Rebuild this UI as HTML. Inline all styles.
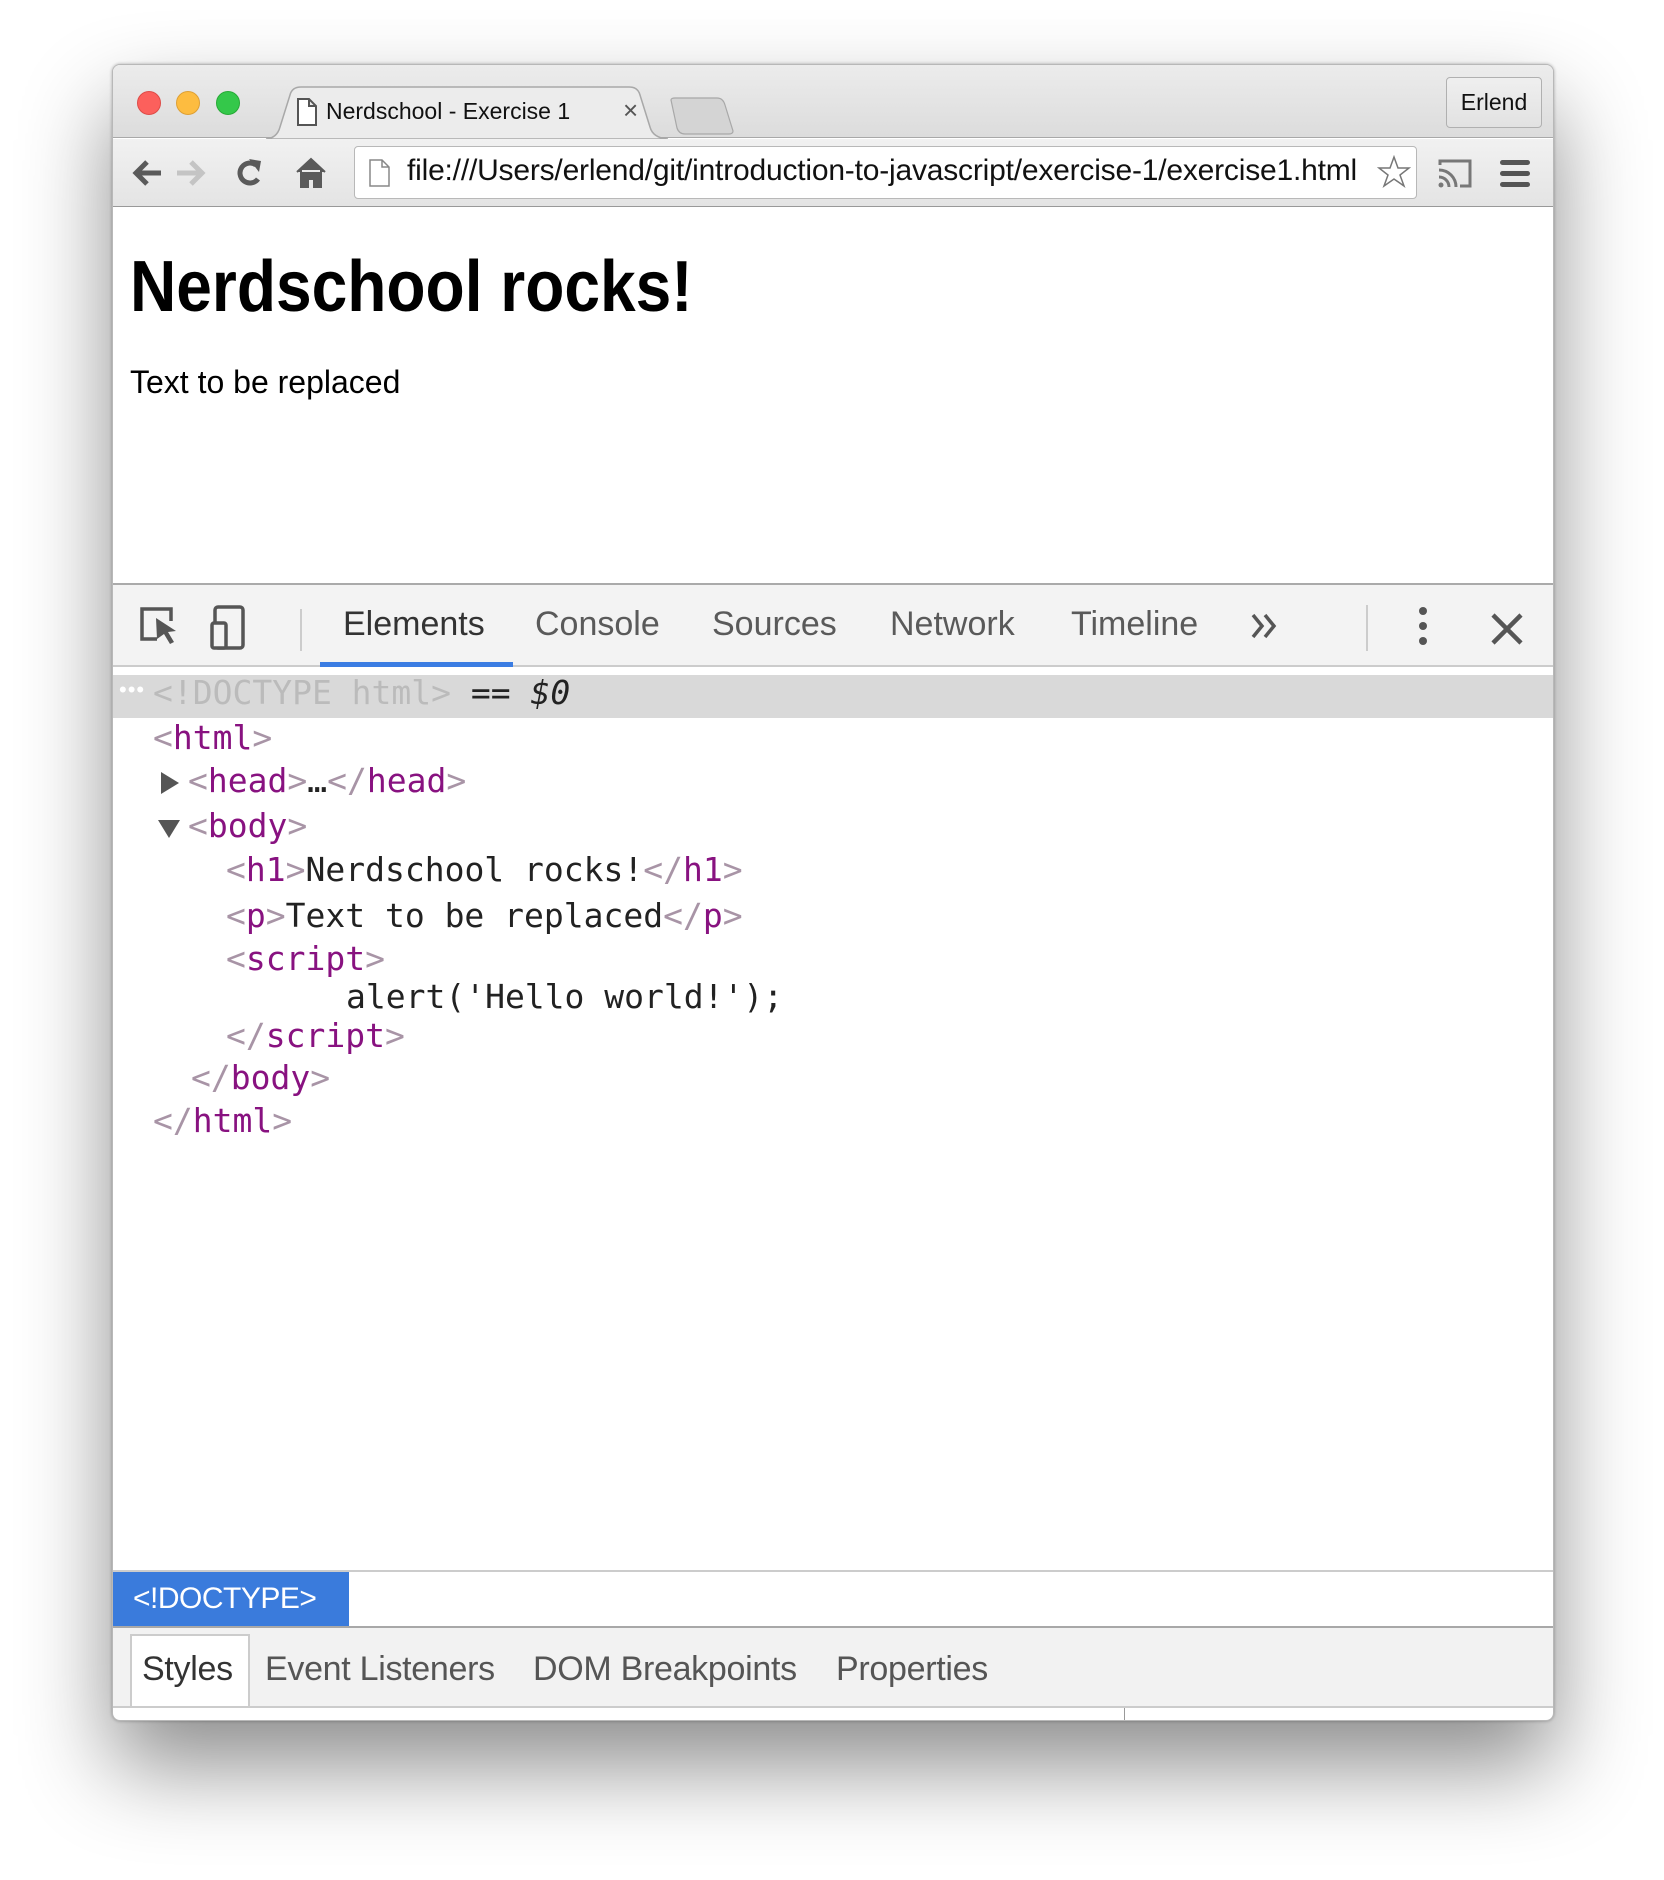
<!DOCTYPE html>
<html><head><style>
*{margin:0;padding:0;box-sizing:border-box}
body{width:1664px;height:1880px;background:#fff;position:relative;overflow:hidden;font-family:"Liberation Sans",sans-serif}
.a{position:absolute}
#win{left:112px;top:64px;width:1442px;height:1657px;border-radius:8px;background:#fff;box-shadow:0 45px 90px rgba(0,0,0,.45),0 0 3px rgba(0,0,0,.3);overflow:hidden;border:1px solid #b8b8b8}
.mono{font-family:"DejaVu Sans Mono","Liberation Mono",monospace;font-size:33px;white-space:pre;color:#222}
.t{color:#881280}.b{color:#a894a6}
</style></head><body>
<div id="win" class="a">
 <div class="a" style="left:0;top:0;width:1442px;height:73px;background:linear-gradient(#ececec,#dcdcdc);border-bottom:1px solid #a8a8a8"></div>
 <div class="a" style="left:24px;top:26px;width:24px;height:24px;border-radius:50%;background:#fc605c;border:1px solid #de4b47"></div>
 <div class="a" style="left:63px;top:26px;width:24px;height:24px;border-radius:50%;background:#fdbc40;border:1px solid #dea034"></div>
 <div class="a" style="left:103px;top:26px;width:24px;height:24px;border-radius:50%;background:#34c84a;border:1px solid #27aa36"></div>
 <svg class="a" style="left:152px;top:21px" width="404" height="54"><path d="M1 53 Q12 52 15 41 L25 9 Q27 1 36 1 L364 1 Q373 1 375 9 L385 41 Q388 52 403 53 Z" fill="#ececec" stroke="#a8a8a8" stroke-width="1.5"/></svg>
 <svg class="a" style="left:554px;top:32px" width="70" height="40"><path d="M4 3 Q4 1 8 1 L50 1 Q56 1 58 8 L66 34 Q66 37 62 37 L18 37 Q12 37 10 31 Z" fill="#d4d4d4" stroke="#a8a8a8" stroke-width="1.2"/></svg>
 <svg class="a" style="left:183px;top:32px" width="22" height="30"><path d="M2 2 H13 L20 9 V28 H2 Z M13 2 V9 H20" fill="#fff" stroke="#555" stroke-width="2"/></svg>
 <div class="a" style="left:213px;top:33px;font-size:23px;color:#111">Nerdschool - Exercise 1</div>
 <div class="a" style="left:510px;top:30px;font-size:26px;color:#555">×</div>
 <div class="a" style="left:1333px;top:12px;width:96px;height:51px;border:1px solid #b0b0b0;border-radius:4px;background:linear-gradient(#efefef,#e2e2e2);font-size:23px;text-align:center;line-height:49px;color:#111">Erlend</div>
 <div class="a" style="left:0;top:74px;width:1442px;height:68px;background:linear-gradient(#f1f1f1,#e4e4e4);border-bottom:1.5px solid #999"></div>
 <svg class="a" style="left:14px;top:88px" width="200" height="40">
  <path d="M34 20 H10 M20 9 L9 20 L20 31" stroke="#5a5a5a" stroke-width="5" fill="none"/>
  <path d="M50 20 H74 M64 9 L75 20 L64 31" stroke="#c4c4c4" stroke-width="5" fill="none"/>
  <path d="M129 12 A10 10 0 1 0 131 26" stroke="#5a5a5a" stroke-width="5" fill="none"/><path d="M122 6 L134 8 L132 19 Z" fill="#5a5a5a"/>
  <path d="M170 19 L184 6 L198 19 M174 17 V34 H181 V26 H187 V34 H194 V17" fill="#5a5a5a" stroke="#5a5a5a" stroke-width="2"/>
 </svg>
 <div class="a" style="left:241px;top:81px;width:1063px;height:53px;background:#fff;border:1px solid #b8b8b8;border-radius:4px"></div>
 <svg class="a" style="left:256px;top:94px" width="22" height="28"><path d="M1 1 H13 L20 8 V27 H1 Z M13 1 V8 H20" fill="#fff" stroke="#888" stroke-width="1.5"/></svg>
 <div class="a" style="left:294px;top:89px;font-size:30px;color:#111;letter-spacing:-0.2px">file:///Users/erlend/git/introduction-to-javascript/exercise-1/exercise1.html</div>
 <svg class="a" style="left:1264px;top:90px" width="34" height="34"><path d="M17 2 L21 13 L32 13 L23 20 L27 31 L17 24 L7 31 L11 20 L2 13 L13 13 Z" fill="#fff" stroke="#777" stroke-width="1.5"/></svg>
 <svg class="a" style="left:1323px;top:92px" width="40" height="34"><path d="M4 8 V4 H34 V29 H24" stroke="#777" stroke-width="3" fill="none"/><path d="M3 13 A17 17 0 0 1 20 30 M3 20 A10 10 0 0 1 13 30" stroke="#777" stroke-width="3" fill="none"/><circle cx="5" cy="28" r="2.5" fill="#777"/></svg>
 <svg class="a" style="left:1387px;top:94px" width="32" height="30"><rect x="0" y="1" width="30" height="5" rx="2.5" fill="#555"/><rect x="0" y="12" width="30" height="5" rx="2.5" fill="#555"/><rect x="0" y="23" width="30" height="5" rx="2.5" fill="#555"/></svg>
 <div class="a" style="left:17px;top:181px;font-size:72px;font-weight:bold;color:#000;transform:scaleX(0.89);transform-origin:0 0;white-space:nowrap">Nerdschool rocks!</div>
 <div class="a" style="left:17px;top:299px;font-size:32px;color:#000;white-space:nowrap">Text to be replaced</div>
 <div class="a" style="left:0;top:518px;width:1442px;height:84px;background:#f3f3f3;border-top:2px solid #aaa;border-bottom:2px solid #ccc"></div>
 <svg class="a" style="left:26px;top:540px" width="120" height="46"><path d="M18 34 H3 V4 H32 V16" stroke="#555" stroke-width="3.5" fill="none"/><path d="M17 13 L37 26 L29 27 L35 37 L31 39 L25 29 L18 34 Z" fill="#555"/><rect x="76" y="2" width="28" height="41" rx="3" stroke="#555" stroke-width="3.5" fill="none"/><rect x="73" y="18" width="14" height="25" rx="2" stroke="#555" stroke-width="3.5" fill="#f3f3f3"/></svg>
 <div class="a" style="left:187px;top:544px;width:2px;height:42px;background:#ccc"></div>
 <div class="a" style="left:207px;top:597px;width:193px;height:5px;background:#3b7de3"></div>
 <div class="a" style="left:230px;top:540px;font-size:34px;color:#333">Elements</div>
 <div class="a" style="left:422px;top:540px;font-size:34px;color:#5a5a5a">Console</div>
 <div class="a" style="left:599px;top:540px;font-size:34px;color:#5a5a5a">Sources</div>
 <div class="a" style="left:777px;top:540px;font-size:34px;color:#5a5a5a">Network</div>
 <div class="a" style="left:958px;top:540px;font-size:34px;color:#5a5a5a">Timeline</div>
 <svg class="a" style="left:1137px;top:547px" width="30" height="28"><path d="M3 3 L12 14 L3 25 M15 3 L24 14 L15 25" stroke="#555" stroke-width="3.5" fill="none"/></svg>
 <div class="a" style="left:1253px;top:540px;width:2px;height:46px;background:#ccc"></div>
 <svg class="a" style="left:1300px;top:540px" width="20" height="46"><circle cx="10" cy="6" r="4" fill="#555"/><circle cx="10" cy="21" r="4" fill="#555"/><circle cx="10" cy="36" r="4" fill="#555"/></svg>
 <svg class="a" style="left:1376px;top:546px" width="36" height="36"><path d="M4 4 L32 32 M32 4 L4 32" stroke="#555" stroke-width="4.5"/></svg>
 <div class="a" style="left:0;top:610px;width:1442px;height:43px;background:#d9d9d9"></div>
 <div class="a" style="left:6px;top:612px;font-size:22px;color:#fff;letter-spacing:1px">•••</div>
 <div class="a mono" style="left:40px;top:608px;color:#bbb">&lt;!DOCTYPE html&gt; <span style="color:#222">== </span><i style="color:#222">$0</i></div>
 <div class="a mono" style="left:40px;top:653px"><span class="b">&lt;</span><span class="t">html</span><span class="b">&gt;</span></div>
 <div class="a" style="left:48px;top:707px;width:0;height:0;border-left:18px solid #555;border-top:11px solid transparent;border-bottom:11px solid transparent"></div>
 <div class="a mono" style="left:75px;top:696px"><span class="b">&lt;</span><span class="t">head</span><span class="b">&gt;</span>…<span class="b">&lt;/</span><span class="t">head</span><span class="b">&gt;</span></div>
 <div class="a" style="left:45px;top:755px;width:0;height:0;border-top:18px solid #555;border-left:11px solid transparent;border-right:11px solid transparent"></div>
 <div class="a mono" style="left:75px;top:741px"><span class="b">&lt;</span><span class="t">body</span><span class="b">&gt;</span></div>
 <div class="a mono" style="left:113px;top:785px"><span class="b">&lt;</span><span class="t">h1</span><span class="b">&gt;</span>Nerdschool rocks!<span class="b">&lt;/</span><span class="t">h1</span><span class="b">&gt;</span></div>
 <div class="a mono" style="left:113px;top:831px"><span class="b">&lt;</span><span class="t">p</span><span class="b">&gt;</span>Text to be replaced<span class="b">&lt;/</span><span class="t">p</span><span class="b">&gt;</span></div>
 <div class="a mono" style="left:113px;top:874px"><span class="b">&lt;</span><span class="t">script</span><span class="b">&gt;</span></div>
 <div class="a mono" style="left:233px;top:912px">alert('Hello world!');</div>
 <div class="a mono" style="left:113px;top:951px"><span class="b">&lt;/</span><span class="t">script</span><span class="b">&gt;</span></div>
 <div class="a mono" style="left:78px;top:993px"><span class="b">&lt;/</span><span class="t">body</span><span class="b">&gt;</span></div>
 <div class="a mono" style="left:40px;top:1036px"><span class="b">&lt;/</span><span class="t">html</span><span class="b">&gt;</span></div>
 <div class="a" style="left:0;top:1505px;width:1442px;height:2px;background:#ccc"></div>
 <div class="a" style="left:0;top:1507px;width:236px;height:54px;background:#3a7bdc;color:#fff;font-size:30px;line-height:54px;padding-left:20px;letter-spacing:-0.5px">&lt;!DOCTYPE&gt;</div>
 <div class="a" style="left:0;top:1561px;width:1442px;height:82px;background:#f2f2f2;border-top:2px solid #a8a8a8;border-bottom:2px solid #ccc"></div>
 <div class="a" style="left:17px;top:1569px;width:120px;height:72px;background:#fff;border:2px solid #ccc;border-bottom:none"></div>
 <div class="a" style="left:29px;top:1585px;font-size:34px;color:#333;letter-spacing:-0.3px">Styles</div>
 <div class="a" style="left:152px;top:1585px;font-size:34px;color:#555;letter-spacing:-0.3px">Event Listeners</div>
 <div class="a" style="left:420px;top:1585px;font-size:34px;color:#555;letter-spacing:-0.3px">DOM Breakpoints</div>
 <div class="a" style="left:723px;top:1585px;font-size:34px;color:#555;letter-spacing:-0.3px">Properties</div>
 <div class="a" style="left:1011px;top:1643px;width:1px;height:14px;background:#999"></div>
</div>
</body></html>
